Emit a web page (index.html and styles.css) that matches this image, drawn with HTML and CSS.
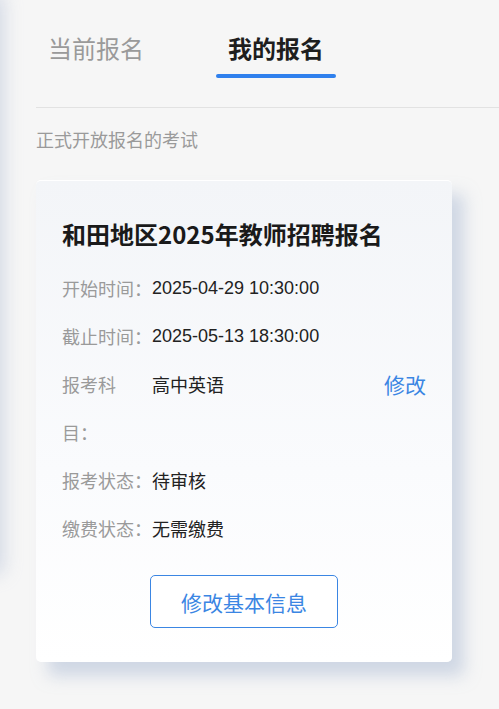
FILE: index.html
```html
<!DOCTYPE html>
<html lang="zh-CN">
<head>
<meta charset="utf-8">
<title>我的报名</title>
<link rel="stylesheet" href="styles.css">
</head>
<body>
<div class="page">
  <div class="ghost-slide" aria-hidden="true"></div>
  <header class="tabs">
    <div class="tab">当前报名</div>
    <div class="tab tab-active">我的报名<span class="tab-bar"></span></div>
  </header>
  <div class="divider"></div>
  <p class="section-title">正式开放报名的考试</p>
  <section class="card">
    <h2 class="card-title">和田地区2025年教师招聘报名</h2>
    <div class="row">
      <span class="label">开始时间：</span>
      <span class="value num">2025-04-29 10:30:00</span>
    </div>
    <div class="row">
      <span class="label">截止时间：</span>
      <span class="value num">2025-05-13 18:30:00</span>
    </div>
    <div class="row">
      <span class="label label-narrow">报考科目：</span>
      <span class="value">高中英语</span>
      <a class="link" href="#">修改</a>
    </div>
    <div class="row">
      <span class="label">报考状态：</span>
      <span class="value">待审核</span>
    </div>
    <div class="row">
      <span class="label">缴费状态：</span>
      <span class="value">无需缴费</span>
    </div>
    <div class="actions">
      <button class="btn-outline" type="button">修改基本信息</button>
    </div>
  </section>
</div>
</body>
</html>
```
FILE: styles.css
```css
html, body {
  margin: 0;
  padding: 0;
}
body {
  background: #f6f6f6;
  font-family: "Noto Sans CJK SC", "Liberation Sans", sans-serif;
  overflow: hidden;
}
.page {
  position: relative;
  width: 499px;
  height: 709px;
  overflow: hidden;
}
.ghost-slide {
  position: absolute;
  left: -420px;
  top: -20px;
  width: 412px;
  height: 580px;
  background: #f6f6f6;
  border-radius: 5px;
  box-shadow: 12px 14px 18px rgba(170, 185, 210, 0.45);
}
.tabs {
  position: relative;
  display: flex;
  gap: 60px;
  padding: 30px 0 0 36px;
}
.tab {
  width: 120px;
  display: flex;
  flex-direction: column;
  align-items: center;
  font-size: 24px;
  line-height: 36px;
  color: #9a9a9a;
}
.tab-active {
  color: #1e1e1e;
  font-weight: 700;
}
.tab-bar {
  display: block;
  width: 120px;
  height: 4px;
  margin-top: 8px;
  border-radius: 2px;
  background: #2f80ed;
}
.divider {
  position: relative;
  margin: 29px 0 0 36px;
  height: 1px;
  background: #e2e2e2;
}
.tabs .tab:first-child {
  padding-bottom: 12px;
}
.section-title {
  position: relative;
  margin: 19px 0 0 36px;
  font-size: 18px;
  line-height: 24px;
  color: #9a9a9a;
}
.card {
  position: relative;
  margin: 29px 0 0 36px;
  width: 416px;
  box-sizing: border-box;
  padding: 36px 26px 34px 26px;
  border-radius: 5px;
  border-top: 1px solid #ffffff;
  background: linear-gradient(180deg, #f3f5f8 0%, #fafbfd 60%, #ffffff 100%);
  box-shadow: 12px 14px 16px rgba(170, 185, 212, 0.5);
}
.card-title {
  margin: -1px 0 12px 0;
  font-size: 24px;
  line-height: 36px;
  font-weight: 700;
  color: #1a1a1a;
}
.row {
  display: flex;
  align-items: flex-start;
  font-size: 18px;
  line-height: 48px;
}
.label {
  width: 90px;
  flex: none;
  color: #9a9a9a;
}
.label-narrow {
  width: 54px;
  margin-right: 36px;
}
.value {
  color: #222222;
}
.value.num {
  font-family: "Liberation Sans", "Noto Sans CJK SC", sans-serif;
}
.link {
  margin-left: auto;
  font-size: 21px;
  line-height: 48px;
  color: #3b86e3;
  text-decoration: none;
}
.actions {
  display: flex;
  justify-content: center;
  margin-top: 23px;
}
.btn-outline {
  width: 188px;
  height: 53px;
  padding: 0;
  border: 1px solid #3b86e3;
  border-radius: 5px;
  background: #ffffff;
  color: #3b86e3;
  font-family: "Noto Sans CJK SC", "Liberation Sans", sans-serif;
  font-size: 21px;
}
```
